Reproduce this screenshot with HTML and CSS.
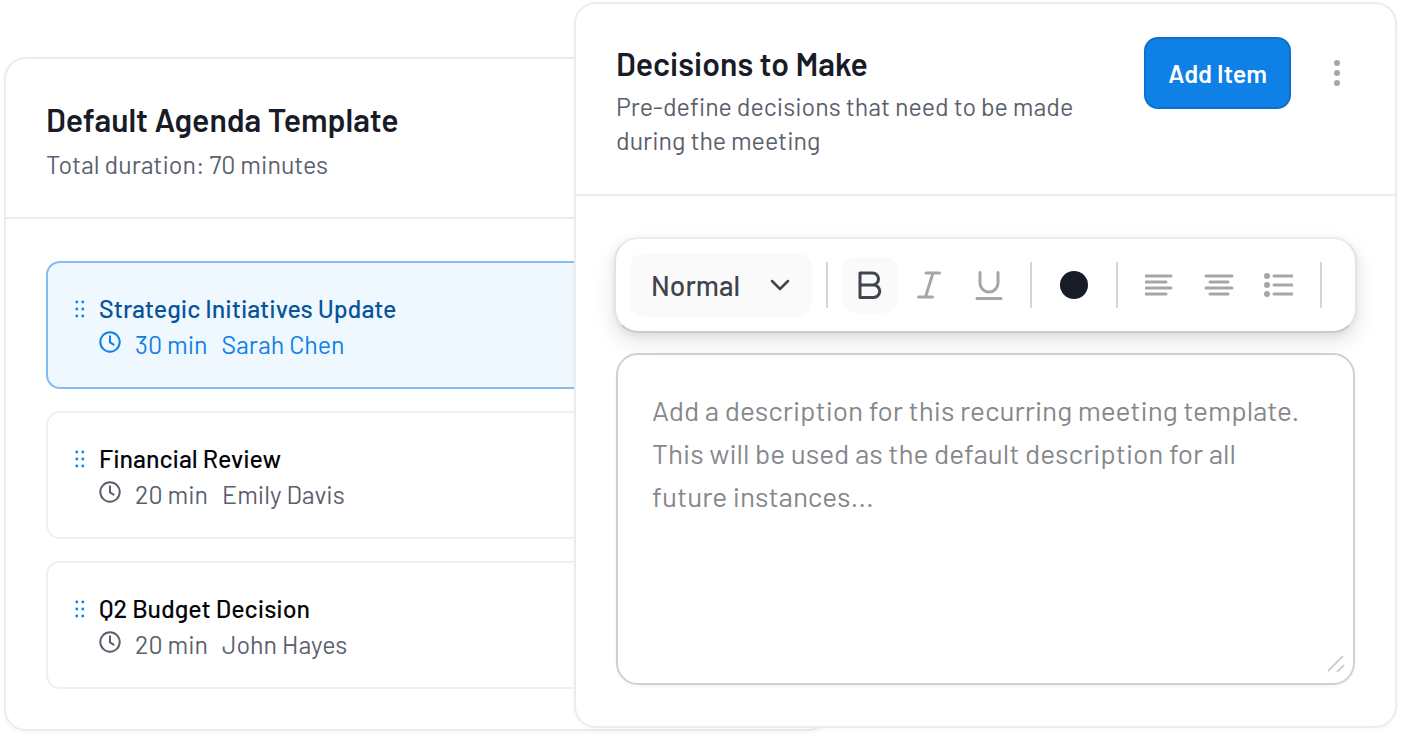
FILE: index.html
```html
<!DOCTYPE html>
<html lang="en">
<head>
    <meta charset="UTF-8">
    <meta name="viewport" content="width=device-width, initial-scale=1.0">
    <title>Meeting Template</title>
    <link rel="stylesheet" href="styles.css">
</head>
<body>
    <!-- Shared icons -->
    <svg class="icon-defs" aria-hidden="true">
        <symbol id="icon-drag" viewBox="0 0 10 18">
            <circle cx="1.8" cy="2" r="1.4"/><circle cx="7.8" cy="2" r="1.4"/>
            <circle cx="1.8" cy="9" r="1.4"/><circle cx="7.8" cy="9" r="1.4"/>
            <circle cx="1.8" cy="16" r="1.4"/><circle cx="7.8" cy="16" r="1.4"/>
        </symbol>
        <symbol id="icon-clock" viewBox="0 0 22 22">
            <circle cx="11" cy="11" r="9.7"/>
            <path d="M11 5.2v6.2l3.6 2.2"/>
        </symbol>
    </svg>

    <main class="stage">
        <section class="card agenda">
            <header class="agenda-header">
                <h2>Default Agenda Template</h2>
                <p>Total duration: 70 minutes</p>
            </header>
            <ul class="agenda-list">
                <li class="agenda-item active">
                    <svg class="drag"><use href="#icon-drag"/></svg>
                    <div class="agenda-text">
                        <h3>Strategic Initiatives Update</h3>
                        <p class="meta"><svg class="clock"><use href="#icon-clock"/></svg><span>30 min</span><span>Sarah Chen</span></p>
                    </div>
                </li>
                <li class="agenda-item">
                    <svg class="drag"><use href="#icon-drag"/></svg>
                    <div class="agenda-text">
                        <h3>Financial Review</h3>
                        <p class="meta"><svg class="clock"><use href="#icon-clock"/></svg><span>20 min</span><span>Emily Davis</span></p>
                    </div>
                </li>
                <li class="agenda-item">
                    <svg class="drag"><use href="#icon-drag"/></svg>
                    <div class="agenda-text">
                        <h3>Q2 Budget Decision</h3>
                        <p class="meta"><svg class="clock"><use href="#icon-clock"/></svg><span>20 min</span><span>John Hayes</span></p>
                    </div>
                </li>
            </ul>
        </section>

        <section class="card decisions">
            <header class="decisions-header">
                <div class="decisions-title">
                    <h2>Decisions to Make</h2>
                    <p>Pre-define decisions that need to be made during the meeting</p>
                </div>
                <button class="add-btn" type="button">Add Item</button>
                <button class="more-btn" type="button" aria-label="More options">
                    <svg width="8" height="28" viewBox="0 0 8 28" fill="#a5a6a9">
                        <circle cx="4" cy="4" r="3"/><circle cx="4" cy="14" r="3"/><circle cx="4" cy="24" r="3"/>
                    </svg>
                </button>
            </header>

            <div class="editor">
                <div class="toolbar">
                    <div class="style-select">
                        <select aria-label="Text style">
                            <option>Normal</option>
                        </select>
                        <svg class="chevron" width="20" height="12" viewBox="0 0 20 12"><path d="M2 2l8 8 8-8"/></svg>
                    </div>
                    <span class="divider"></span>
                    <div class="tool-group">
                        <button class="tool selected" type="button" aria-label="Bold">
                            <svg width="30" height="30" viewBox="0 0 30 30"><path d="M5 3h12.500a5.800 5.800 0 0 1 0 12H5zM5 15h13.500a6 6 0 0 1 0 12.500H5z"/></svg>
                        </button>
                        <button class="tool" type="button" aria-label="Italic">
                            <svg width="30" height="30" viewBox="0 0 30 30"><path d="M12 3h13.500M4.500 27h14M19 3l-7.500 24"/></svg>
                        </button>
                        <button class="tool" type="button" aria-label="Underline">
                            <svg width="30" height="30" viewBox="0 0 30 30"><path d="M7 2.500v10.500a9 9 0 0 0 18 0V2.500M4 28.500h24"/></svg>
                        </button>
                    </div>
                    <span class="divider"></span>
                    <button class="tool" type="button" aria-label="Text colour"><span class="swatch"></span></button>
                    <span class="divider"></span>
                    <div class="tool-group">
                        <button class="tool" type="button" aria-label="Align left">
                            <svg width="30" height="30" viewBox="0 0 30 30"><path d="M1 6h25M1 12h20M1 18h25M1 24h20"/></svg>
                        </button>
                        <button class="tool" type="button" aria-label="Align centre">
                            <svg width="30" height="30" viewBox="0 0 30 30"><path d="M2 6h26M6 12h18M2 18h26M6 24h18"/></svg>
                        </button>
                        <button class="tool" type="button" aria-label="Bulleted list">
                            <svg width="30" height="30" viewBox="0 0 30 30"><path d="M11 6h18M11 15h18M11 24h18"/><g class="bullets"><circle cx="4" cy="6" r="3"/><circle cx="4" cy="15" r="3"/><circle cx="4" cy="24" r="3"/></g></svg>
                        </button>
                    </div>
                    <span class="divider"></span>
                </div>

                <div class="description">
                    <textarea aria-label="Description" placeholder="Add a description for this recurring meeting template. This will be used as the default description for all future instances..."></textarea>
                    <svg class="grip" width="18" height="18" viewBox="0 0 18 18"><path d="M1 16L16 1M10 17l7-7"/></svg>
                </div>
            </div>
        </section>
    </main>
</body>
</html>
```
FILE: styles.css
```css
* {
    box-sizing: border-box;
}

body {
    margin: 0;
    background: #ffffff;
    color: #181c27;
    font-family: 'Barlow', 'Roboto', sans-serif;
}

h2, h3, p, ul {
    margin: 0;
    padding: 0;
}

button, select, textarea {
    font-family: inherit;
}

.icon-defs {
    display: none;
}

/* Two cards that overlap in the middle column */
.stage {
    display: grid;
    grid-template-columns: 570fr 256fr 567fr;
    align-items: start;
    padding: 2px 5px 6px 4px;
}

.card {
    grid-row: 1;
    background: #ffffff;
    border: 2px solid #ececed;
    border-radius: 22px;
    box-shadow: 0 2px 4px rgba(0, 0, 0, 0.03);
}

.card h2 {
    font-size: 32px;
    font-weight: 600;
    line-height: 36px;
}

.card header p {
    color: #5b606c;
    font-size: 25px;
    font-weight: 400;
    line-height: 34px;
}

/* Agenda card */
.agenda {
    grid-column: 1 / 3;
    margin-top: 55px;
}

.agenda-header {
    padding: 42px 40px 36px;
    border-bottom: 2px solid #ececed;
}

.agenda-header p {
    margin-top: 10px;
}

.agenda-list {
    display: flex;
    flex-direction: column;
    gap: 22px;
    padding: 42px 40px 40px;
    list-style: none;
}

.agenda-item {
    display: flex;
    gap: 14px;
    padding: 27px;
    border: 2px solid #f0f0f0;
    border-radius: 14px;
    color: #05060a;
}

.drag {
    width: 10px;
    height: 18px;
    margin-top: 10px;
    fill: #0f80e6;
}

.agenda-item h3 {
    font-size: 25px;
    font-weight: 500;
    line-height: 36px;
}

.meta {
    display: flex;
    align-items: center;
    gap: 14px;
    color: #5b606c;
    font-size: 25px;
    font-weight: 400;
    line-height: 36px;
    margin-bottom: -2px;
}

.clock {
    width: 22px;
    height: 22px;
    margin-bottom: 4px;
    fill: none;
    stroke: currentColor;
    stroke-width: 2;
    stroke-linecap: round;
    stroke-linejoin: round;
}

.agenda-item.active {
    background: #eff7ff;
    border-color: #84bdf1;
    color: #07549b;
}

.active .meta {
    color: #0f80e6;
}

/* Decisions card */
.decisions {
    grid-column: 2 / 4;
    z-index: 1;
}

.decisions-header {
    display: flex;
    align-items: flex-start;
    padding: 33px 40px 37px;
    border-bottom: 2px solid #ececed;
}

.decisions-title {
    flex: 1;
    padding: 8px 50px 0 0;
}

.decisions-title p {
    margin-top: 8px;
}

.add-btn {
    padding: 0 22px;
    background: #0f80e6;
    border: 2px solid #0d70ca;
    border-radius: 14px;
    color: #ffffff;
    font-size: 25px;
    font-weight: 600;
    line-height: 68px;
    cursor: pointer;
}

.more-btn {
    display: flex;
    align-items: center;
    height: 72px;
    margin: 0 14px 0 42px;
    padding: 0;
    background: none;
    border: none;
    cursor: pointer;
}

.editor {
    padding: 41px 38px;
}

.toolbar {
    display: flex;
    align-items: center;
    gap: 14px;
    padding: 14px;
    background: #ffffff;
    border: 2px solid;
    border-color: #ececed #e2e3e4 #c8cacb;
    border-radius: 24px;
    box-shadow: 0 10px 22px rgba(20, 30, 35, 0.1), 0 3px 8px rgba(20, 30, 35, 0.07);
    position: relative;
}

.style-select {
    display: grid;
    align-items: center;
}

.style-select select {
    grid-area: 1 / 1;
    width: 182px;
    height: 64px;
    padding: 0 21px;
    appearance: none;
    background: #fafafa;
    border: none;
    border-radius: 14px;
    color: #3f444e;
    font-size: 28px;
    font-weight: 500;
}

.chevron {
    grid-area: 1 / 1;
    justify-self: end;
    margin-right: 22px;
    fill: none;
    stroke: #3f444e;
    stroke-width: 2.5;
    stroke-linecap: round;
    stroke-linejoin: round;
    pointer-events: none;
}

.divider {
    width: 2px;
    height: 46px;
    background: #d4d5d6;
}

.tool-group {
    display: flex;
    gap: 3px;
}

.tool {
    display: flex;
    align-items: center;
    justify-content: center;
    width: 56px;
    height: 56px;
    padding: 0;
    background: none;
    border: none;
    border-radius: 14px;
    color: #a5a6a9;
    cursor: pointer;
}

.tool.selected {
    background: #fafafa;
    color: #3f444e;
}

.tool svg {
    fill: none;
    stroke: currentColor;
    stroke-width: 3;
    stroke-linecap: round;
    stroke-linejoin: round;
}

.tool .bullets {
    fill: currentColor;
    stroke: none;
}

.swatch {
    width: 28px;
    height: 28px;
    background: #181c27;
    border-radius: 50%;
}

.description {
    position: relative;
    margin: 20px 2px 0;
}

.description textarea {
    display: block;
    width: 100%;
    height: 332px;
    padding: 34px 42px 34px 34px;
    background: transparent;
    border: 2px solid #cfd0d1;
    border-radius: 22px;
    box-shadow: 0 2px 3px rgba(0, 0, 0, 0.04);
    font-size: 28px;
    font-weight: 400;
    line-height: 43px;
    resize: none;
    outline: none;
}

.description textarea::placeholder {
    color: #86888c;
}

.grip {
    position: absolute;
    right: 10px;
    bottom: 12px;
    fill: none;
    stroke: #cfd0d1;
    stroke-width: 2;
    pointer-events: none;
}
```
